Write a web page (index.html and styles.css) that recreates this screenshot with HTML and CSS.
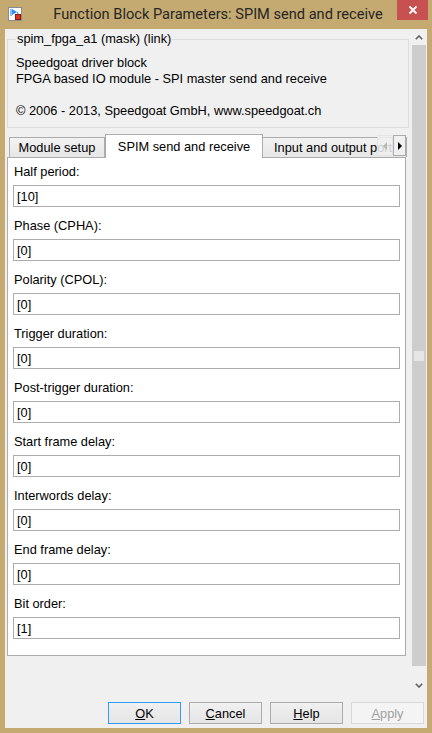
FILE: index.html
```html
<!DOCTYPE html>
<html>
<head>
<meta charset="utf-8">
<link rel="stylesheet" href="styles.css">
</head>
<body>
<div class="window">
  <div class="titlebar">
    <svg class="appicon" viewBox="0 0 14 14" width="14" height="14">
      <rect x="0.5" y="0.5" width="13" height="13" fill="#fff" stroke="#8c8c8c"/>
      <line x1="3" y1="2" x2="3" y2="9" stroke="#2f7fd8" stroke-width="1"/>
      <polygon points="4,2 9,5 4,8" fill="#2f8ff0"/>
      <line x1="9" y1="5" x2="10.5" y2="7.5" stroke="#2f7fd8" stroke-width="1"/>
      <rect x="7.5" y="7.5" width="5" height="5" fill="#e0301e" stroke="#8a1a10"/>
    </svg>
    <div class="title">Function Block Parameters: SPIM send and receive</div>
    <div class="close">
      <svg viewBox="0 0 10 10" width="10" height="10">
        <path d="M1.5 1.5 L8.5 8.5 M8.5 1.5 L1.5 8.5" stroke="#fff" stroke-width="1.8"/>
      </svg>
    </div>
  </div>
  <div class="client">
    <div class="scrollpane">
      <div class="content">
        <fieldset class="group">
          <legend>spim_fpga_a1 (mask) (link)</legend>
          <p class="desc">Speedgoat driver block<br>FPGA based IO module - SPI master send and receive<br><br>© 2006 - 2013, Speedgoat GmbH, www.speedgoat.ch</p>
        </fieldset>
        <div class="tabs">
          <div class="tab tab-module">Module setup</div>
          <div class="tab tab-active">SPIM send and receive</div>
          <div class="tab tab-io">Input and output ports</div>
          <div class="tabscroll tabscroll-left">
            <svg viewBox="0 0 6 8" width="6" height="8"><polygon points="5,0 5,8 1,4" fill="#b8b8b8"/></svg>
          </div>
          <div class="tabscroll tabscroll-right">
            <svg viewBox="0 0 6 8" width="6" height="8"><polygon points="1,0 1,8 5,4" fill="#000"/></svg>
          </div>
        </div>
        <div class="panel">
          <div class="field"><label>Half period:</label><input class="edit" type="text" value="[10]"></div>
          <div class="field"><label>Phase (CPHA):</label><input class="edit" type="text" value="[0]"></div>
          <div class="field"><label>Polarity (CPOL):</label><input class="edit" type="text" value="[0]"></div>
          <div class="field"><label>Trigger duration:</label><input class="edit" type="text" value="[0]"></div>
          <div class="field"><label>Post-trigger duration:</label><input class="edit" type="text" value="[0]"></div>
          <div class="field"><label>Start frame delay:</label><input class="edit" type="text" value="[0]"></div>
          <div class="field"><label>Interwords delay:</label><input class="edit" type="text" value="[0]"></div>
          <div class="field"><label>End frame delay:</label><input class="edit" type="text" value="[0]"></div>
          <div class="field"><label>Bit order:</label><input class="edit" type="text" value="[1]"></div>
        </div>
      </div>
      <div class="vscroll">
        <div class="sb-arrow">
          <svg viewBox="0 0 8 5" width="8" height="5"><polyline points="0.8,4.2 4,1 7.2,4.2" fill="none" stroke="#606060" stroke-width="1.6"/></svg>
        </div>
        <div class="sb-thumb"><div class="sb-grip"></div></div>
        <div class="sb-track"></div>
        <div class="sb-arrow">
          <svg viewBox="0 0 8 5" width="8" height="5"><polyline points="0.8,0.8 4,4 7.2,0.8" fill="none" stroke="#606060" stroke-width="1.6"/></svg>
        </div>
      </div>
    </div>
    <div class="buttons">
      <button class="btn btn-default"><u>O</u>K</button>
      <button class="btn"><u>C</u>ancel</button>
      <button class="btn"><u>H</u>elp</button>
      <button class="btn btn-disabled"><u>A</u>pply</button>
    </div>
  </div>
</div>
</body>
</html>
```

FILE: styles.css
```css
html, body {
  margin: 0;
  padding: 0;
}

body {
  width: 432px;
  height: 733px;
  overflow: hidden;
  font-family: "Liberation Sans", Arial, sans-serif;
  font-size: 12.8px;
  color: #000;
}

.window {
  height: 733px;
  background: #c4aa71;
  display: flex;
  flex-direction: column;
}

.titlebar {
  height: 29px;
  flex: none;
  display: grid;
  grid-template-columns: 1fr auto 1fr;
  padding: 0 4px 0 8px;
}

.appicon {
  margin-top: 7px;
  display: block;
}

.title {
  font-family: Roboto, "Liberation Sans", sans-serif;
  font-size: 14.6px;
  line-height: 28px;
  color: #262626;
  white-space: nowrap;
}

.close {
  justify-self: end;
  width: 31px;
  height: 20px;
  background: #c75050;
  display: flex;
  align-items: center;
  justify-content: center;
}

.close svg {
  display: block;
}

.client {
  flex: 1;
  margin: 0 5px 5px;
  background: #f0f0f0;
  display: flex;
  flex-direction: column;
}

.scrollpane {
  height: 664px;
  flex: none;
  display: flex;
}

.content {
  flex: 1;
  padding: 2px 0 0 2px;
}

.group {
  margin: 0;
  width: 402px;
  box-sizing: border-box;
  border: 1px solid #dcdcdc;
  padding: 8px 8px 8px 8px;
  min-inline-size: 0;
}

.group legend {
  padding: 0 1px;
  line-height: 16px;
}

.desc {
  margin: 0;
  line-height: 16px;
}

.tabs {
  position: relative;
  margin: 6px 0 0 2px;
  height: 23px;
  display: flex;
  align-items: flex-end;
}

.tab {
  box-sizing: border-box;
  border: 1px solid #acacac;
  border-bottom: none;
  background: linear-gradient(#f2f2f2, #e6e6e6);
  display: flex;
  align-items: center;
  white-space: nowrap;
  height: 20px;
}

.tab-module {
  width: 96px;
  justify-content: center;
}

.tab-active {
  align-self: flex-start;
  position: relative;
  z-index: 1;
  height: 24px;
  width: 158px;
  background: #fff;
  justify-content: center;
}

.tab-io {
  width: 144px;
  padding-left: 11px;
  overflow: hidden;
  border-left: none;
}

.tabscroll {
  position: absolute;
  top: 1px;
  height: 21px;
  box-sizing: border-box;
  display: flex;
  align-items: center;
  justify-content: center;
  z-index: 2;
}

.tabscroll svg {
  display: block;
}

.tabscroll-left {
  left: 368px;
  width: 16px;
  background: rgba(240, 240, 240, 0.85);
  border: 1px solid #e4e4e4;
}

.tabscroll-right {
  left: 384px;
  width: 13px;
  background: #f0f0f0;
  border: 1px solid #acacac;
}

.panel {
  width: 399px;
  box-sizing: border-box;
  border: 1px solid #acacac;
  background: #fff;
  padding: 6px 0 16px 5px;
}

.field label {
  display: block;
  line-height: 16px;
  margin-left: 1px;
}

.field + .field {
  margin-top: 11px;
}

.edit {
  display: block;
  margin: 5px 0 0 0;
  width: 387px;
  height: 22px;
  box-sizing: border-box;
  border: 1px solid #acacac;
  padding: 0 3px;
  font-family: inherit;
  font-size: inherit;
  color: #000;
  background: #fff;
  outline: none;
}

.vscroll {
  width: 16px;
  flex: none;
  display: flex;
  flex-direction: column;
  background: #f0f0f0;
}

.sb-arrow {
  height: 16px;
  display: flex;
  align-items: center;
  justify-content: center;
}

.sb-arrow svg {
  display: block;
}

.sb-thumb {
  height: 621px;
  margin: 0 1px;
  background: #cdcdcd;
  display: flex;
  align-items: center;
  justify-content: center;
}

.sb-grip {
  width: 10px;
  height: 10px;
  background: #e6e6e6;
}

.sb-track {
  flex: 1;
}

.buttons {
  flex: 1;
  display: flex;
  justify-content: flex-end;
  align-items: flex-start;
  gap: 8px;
  padding: 9px 3px 0 0;
}

.btn {
  width: 73px;
  height: 22px;
  box-sizing: border-box;
  border: 1px solid #acacac;
  background: linear-gradient(#f0f0f0, #e5e5e5);
  font-family: inherit;
  font-size: inherit;
  color: #000;
  padding: 0;
  margin: 0;
}

.btn-default {
  border-color: #3399ff;
}

.btn-disabled {
  border-color: #d9d9d9;
  background: #f4f4f4;
  color: #a0a0a0;
}
```
